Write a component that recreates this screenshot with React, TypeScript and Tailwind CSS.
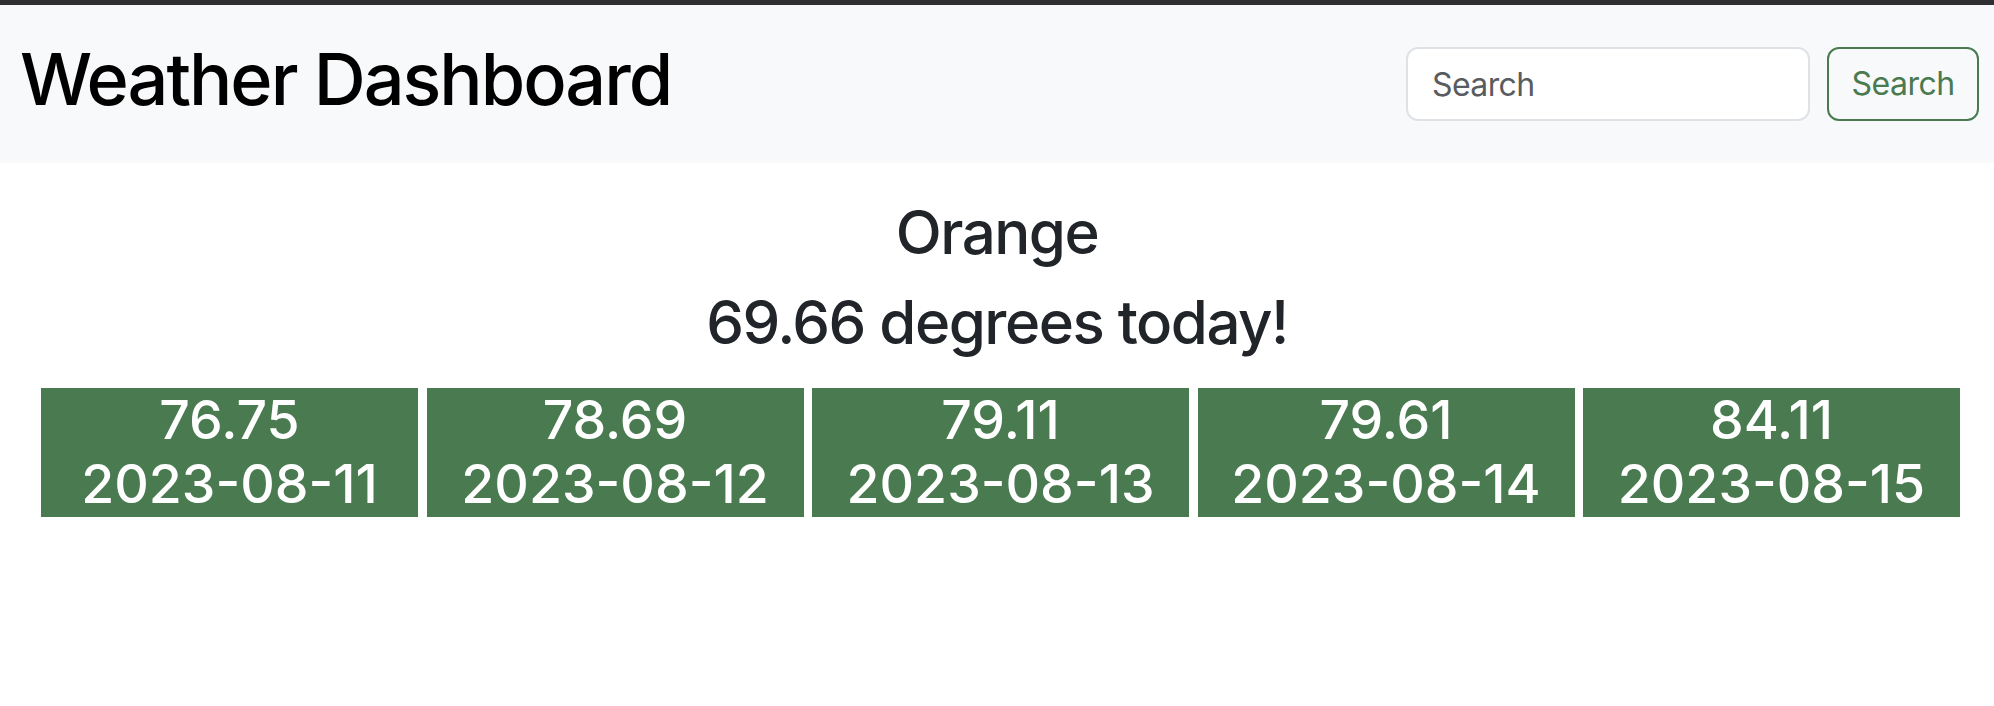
import React from 'react';

const forecast = [
  { temp: '76.75', date: '2023-08-11' },
  { temp: '78.69', date: '2023-08-12' },
  { temp: '79.11', date: '2023-08-13' },
  { temp: '79.61', date: '2023-08-14' },
  { temp: '84.11', date: '2023-08-15' },
];

const App: React.FC = () => {
  return (
    <div className="min-h-[706px] bg-white font-['Inter','Liberation_Sans',Arial,sans-serif]">
      {/* window edge */}
      <div className="h-[5px] bg-[#2f2f31]" />

      {/* Navbar */}
      <nav className="flex h-[158px] items-start justify-between bg-[#f8f9fa] pl-[20px] pr-[15px]">
        <h1 className="mt-[38px] text-[72px] leading-[72px] font-medium tracking-[-2px] text-black">Weather Dashboard</h1>
        <form className="mt-[42px] flex gap-[17px]" onSubmit={(e) => e.preventDefault()}>
          <input
            type="search"
            placeholder="Search"
            className="h-[74px] w-[404px] rounded-[12px] border-2 border-[#dee2e6] bg-white px-[24px] text-[32px] tracking-[-0.6px] text-[#212529] outline-none placeholder:text-[#595c5f]"
          />
          <button className="h-[74px] w-[152px] rounded-[12px] border-2 border-[#4a7a4f] bg-transparent text-[32px] tracking-[-0.5px] text-[#4a7a4f]">
            Search
          </button>
        </form>
      </nav>

      {/* Current weather */}
      <div className="pt-[33px] text-center text-[#212529] tracking-[-1.5px]">
        <h2 className="text-[60px] leading-[72px] font-medium">Orange</h2>
        <h2 className="mt-[18px] text-[60px] leading-[72px] font-medium">69.66 degrees today!</h2>
      </div>

      {/* Forecast */}
      <div className="mt-[30px] ml-[41px] mr-[34px] flex gap-[8.5px]">
        {forecast.map((day) => (
          <div key={day.date} className="flex-1 bg-[#4a7a4f] text-center text-white">
            <h3 className="text-[53.6px] leading-[64.3px] font-medium">{day.temp}</h3>
            <h3 className="text-[53.6px] leading-[64.3px] font-medium">{day.date}</h3>
          </div>
        ))}
      </div>
    </div>
  );
};

export default App;
